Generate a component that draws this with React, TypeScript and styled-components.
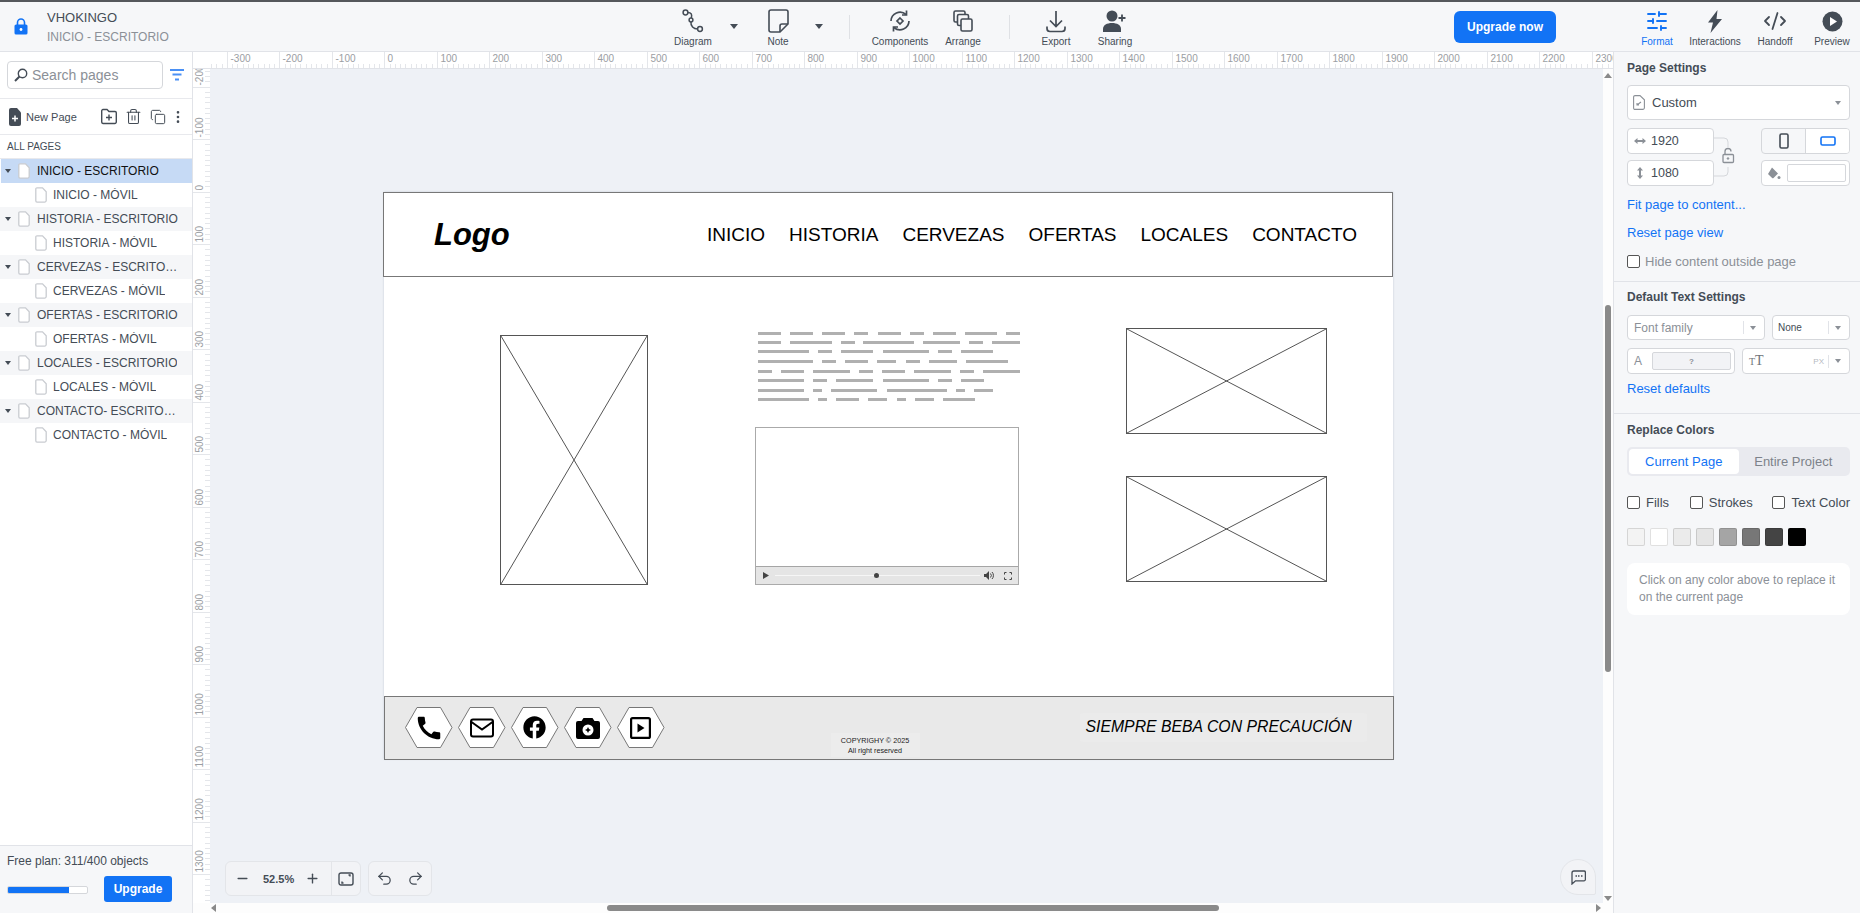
import React from 'react';
import styled, { createGlobalStyle } from 'styled-components';
import { FaFacebook } from 'react-icons/fa';
import { MdCall } from 'react-icons/md';
import { Minus, Plus, Undo2, Redo2, SlidersHorizontal, CodeXml, Trash2, Copy, EllipsisVertical } from 'lucide-react';

const GlobalStyle = createGlobalStyle`
  html, body { margin: 0; padding: 0; height: 100%; overflow: hidden; }
  body { font-family: "Liberation Sans", Arial, sans-serif; color: #444c56; background: #f6f7f9; }
  #root { height: 100%; }
  * { box-sizing: border-box; }
`;

const Shell = styled.div`
  width: 1860px;
  height: 913px;
  display: flex;
  flex-direction: column;
  border-top: 2px solid #55585c;
`;

/* Top bar */
const TopBar = styled.header`
  height: 50px;
  flex-shrink: 0;
  display: flex;
  align-items: flex-start;
  background: #f6f7f9;
  border-bottom: 1px solid #e1e3e8;
`;
const Brand = styled.div`
  width: 663px;
  height: 49px;
  display: flex;
  align-items: center;
  padding-left: 14px;
  gap: 19px;
`;
const BrandText = styled.div`
  display: flex;
  flex-direction: column;
  gap: 5px;
  margin-top: 1px;
`;
const ProjectName = styled.div`
  font-size: 13px;
  line-height: 15px;
  color: #444c56;
`;
const PageName = styled.div`
  font-size: 12px;
  line-height: 14px;
  color: #8b9097;
`;
const Tool = styled.div<{ $w?: number; $ml?: number; $active?: boolean }>`
  width: ${p => p.$w ?? 60}px;
  margin-left: ${p => p.$ml ?? 0}px;
  height: 49px;
  display: flex;
  flex-direction: column;
  align-items: center;
  color: ${p => (p.$active ? '#1273f5' : '#444c56')};
`;
const ToolIcon = styled.div`
  height: 26px;
  margin-top: 6px;
  display: flex;
  align-items: center;
  justify-content: center;
`;
const ToolLabel = styled.div`
  font-size: 10px;
  line-height: 12px;
  margin-top: 2px;
  white-space: nowrap;
`;
const Caret = styled.div<{ $ml: number }>`
  width: 12px;
  margin-left: ${p => p.$ml}px;
  margin-top: 22px;
  display: flex;
  justify-content: center;
  &::after {
    content: '';
    border-left: 4px solid transparent;
    border-right: 4px solid transparent;
    border-top: 5px solid #444c56;
  }
`;
const ToolSep = styled.div<{ $ml: number }>`
  width: 1px;
  height: 24px;
  margin-top: 13px;
  margin-left: ${p => p.$ml}px;
  background: #dfe1e5;
`;
const UpgradeNow = styled.button<{ $ml: number }>`
  width: 102px;
  height: 32px;
  margin-left: ${p => p.$ml}px;
  margin-top: 9px;
  border: none;
  border-radius: 6px;
  background: #1273f5;
  color: #fff;
  font: bold 12px "Liberation Sans", Arial, sans-serif;
`;

/* Main row */
const Main = styled.div`
  flex: 1;
  display: flex;
  min-height: 0;
`;

/* Left panel */
const LeftPanel = styled.aside`
  width: 193px;
  flex-shrink: 0;
  display: flex;
  flex-direction: column;
  background: #fff;
  border-right: 1px solid #e1e3e8;
`;
const SearchRow = styled.div`
  height: 47px;
  flex-shrink: 0;
  display: flex;
  align-items: center;
  padding-left: 7px;
  gap: 7px;
  border-bottom: 1px solid #e8e9ed;
`;
const SearchBox = styled.div`
  width: 156px;
  height: 28px;
  display: flex;
  align-items: center;
  gap: 4px;
  padding-left: 6px;
  border: 1px solid #d5d7db;
  border-radius: 4px;
  font-size: 14px;
  color: #8b9097;
`;
const PageActions = styled.div`
  height: 36px;
  flex-shrink: 0;
  display: flex;
  align-items: center;
  padding-left: 9px;
  color: #444c56;
  border-bottom: 1px solid #e8e9ed;
`;
const NewPage = styled.div`
  width: 92px;
  display: flex;
  align-items: center;
  gap: 5px;
  font-size: 11px;
`;
const ActionIcons = styled.div`
  display: flex;
  align-items: center;
  gap: 8px;
`;
const MoreIcon = styled.span`
  display: flex;
  margin-left: -4px;
`;
const AllPages = styled.div`
  height: 24px;
  flex-shrink: 0;
  display: flex;
  align-items: center;
  padding-left: 7px;
  font-size: 10px;
  border-bottom: 1px solid #e8e9ed;
`;
const PageRow = styled.div<{ $child?: boolean; $selected?: boolean }>`
  height: 24px;
  flex-shrink: 0;
  display: flex;
  align-items: center;
  font-size: 12px;
  padding-left: ${p => (p.$child ? 35 : p.$selected ? 4 : 5)}px;
  margin-left: ${p => (p.$selected ? 1 : 0)}px;
  gap: ${p => (p.$child ? 6 : 7)}px;
  color: ${p => (p.$selected ? '#111' : '#444c56')};
  background: ${p => (p.$selected ? '#c6daf5' : p.$child ? '#fff' : '#f5f6f8')};
`;
const RowCaret = styled.span`
  width: 6px;
  height: 4px;
  flex-shrink: 0;
  border-left: 3px solid transparent;
  border-right: 3px solid transparent;
  border-top: 4px solid #444c56;
`;
const RowName = styled.span`
  max-width: 142px;
  overflow: hidden;
  white-space: nowrap;
  text-overflow: ellipsis;
`;
const PlanBox = styled.div`
  margin-top: auto;
  height: 68px;
  flex-shrink: 0;
  background: #f6f7f9;
  border-top: 1px solid #e1e3e8;
  padding: 8px 20px 0 7px;
`;
const PlanText = styled.div`
  font-size: 12px;
  line-height: 14px;
`;
const PlanRow = styled.div`
  display: flex;
  align-items: center;
  justify-content: space-between;
  margin-top: 8px;
`;
const Progress = styled.div`
  width: 81px;
  height: 8px;
  margin-top: 1px;
  border: 1px solid #d5d7db;
  border-radius: 2px;
  background: #fff;
  overflow: hidden;
`;
const ProgressFill = styled.div`
  height: 100%;
  background: #1273f5;
`;
const UpgradeSmall = styled.button`
  width: 68px;
  height: 26px;
  border: none;
  border-radius: 3px;
  background: #1273f5;
  color: #fff;
  font: bold 12px "Liberation Sans", Arial, sans-serif;
`;

/* Center */
const Center = styled.main`
  width: 1420px;
  flex-shrink: 0;
  display: grid;
  grid-template-columns: 17px 1fr 10px;
  grid-template-rows: 17px 1fr 10px;
  background: #fff;
`;
const Corner = styled.div`
  background: #fff;
  border-bottom: 1px solid #e1e3e8;
`;
const RulerTop = styled.div`
  grid-column: 2 / 4;
  height: 17px;
  overflow: hidden;
  background: #fff;
  border-bottom: 1px solid #e1e3e8;
`;
const RulerLeft = styled.div`
  overflow: hidden;
  background: #fff;
`;
const Canvas = styled.div`
  position: relative;
  overflow: hidden;
  background: #eef1f6;
`;
const ScrollV = styled.div`
  position: relative;
  background: #fdfdfd;
`;
const ThumbV = styled.div`
  position: absolute;
  left: 2px;
  top: 236px;
  width: 6px;
  height: 367px;
  border-radius: 3px;
  background: #8a8a8a;
`;
const ScrollH = styled.div`
  position: relative;
  grid-column: 1 / 4;
  background: #fdfdfd;
`;
const ThumbH = styled.div`
  position: absolute;
  left: 414px;
  top: 2px;
  width: 612px;
  height: 6px;
  border-radius: 3px;
  background: #8a8a8a;
`;
const Arrow = styled.span<{ $dir: 'up' | 'down' | 'left' | 'right'; $x: number; $y: number }>`
  position: absolute;
  left: ${p => p.$x}px;
  top: ${p => p.$y}px;
  width: 0;
  height: 0;
  border: 4px solid transparent;
  ${p => (p.$dir === 'up' ? 'border-bottom: 5px solid #8a8a8a; border-top: 0;' : '')}
  ${p => (p.$dir === 'down' ? 'border-top: 5px solid #8a8a8a; border-bottom: 0;' : '')}
  ${p => (p.$dir === 'left' ? 'border-right: 5px solid #8a8a8a; border-left: 0;' : '')}
  ${p => (p.$dir === 'right' ? 'border-left: 5px solid #8a8a8a; border-right: 0;' : '')}
`;

/* The wireframe page: a free canvas */
const WirePage = styled.div`
  position: absolute;
  left: 174px;
  top: 123px;
  width: 1009px;
  height: 567px;
  background: #fff;
  box-shadow: 0 0 2px rgba(120, 130, 150, 0.35);
`;
const WireHeader = styled.div`
  position: absolute;
  left: -1px;
  top: 0;
  width: 1010px;
  height: 85px;
  display: flex;
  align-items: center;
  justify-content: space-between;
  padding: 0 35px 0 50px;
  background: #fff;
  border: 1px solid #777;
  color: #000;
`;
const WireLogo = styled.div`
  font-size: 31px;
  font-weight: bold;
  font-style: italic;
`;
const WireNav = styled.nav`
  display: flex;
  gap: 24px;
  font-size: 19px;
`;
const Placeholder = styled.svg<{ $x: number; $y: number; $w: number; $h: number }>`
  position: absolute;
  left: ${p => p.$x}px;
  top: ${p => p.$y}px;
  width: ${p => p.$w}px;
  height: ${p => p.$h}px;
  border: 1px solid #555;
  background: #fff;
`;
const TextLines = styled.div`
  position: absolute;
  left: 374px;
  top: 140px;
  width: 264px;
  display: flex;
  flex-direction: column;
`;
const TextLine = styled.div<{ $mb: number }>`
  display: flex;
  justify-content: space-between;
  margin-bottom: ${p => p.$mb}px;
`;
const TextWord = styled.span<{ $w: number }>`
  width: ${p => p.$w}px;
  height: 3px;
  background: #b0b0b0;
`;
const Video = styled.div`
  position: absolute;
  left: 371px;
  top: 235px;
  width: 264px;
  height: 158px;
  display: flex;
  flex-direction: column;
  justify-content: flex-end;
  background: #fff;
  border: 1px solid #aaa;
`;
const VideoBar = styled.div`
  height: 18px;
  display: flex;
  align-items: center;
  padding: 0 5px 0 7px;
  background: #e5e5e5;
  border-top: 1px solid #a5a5a5;
`;
const VideoTrack = styled.div`
  position: relative;
  width: 205px;
  height: 1px;
  margin-left: 6px;
  background: #f6f6f6;
  &::after {
    content: '';
    position: absolute;
    left: 99px;
    top: -2px;
    width: 5px;
    height: 5px;
    border-radius: 50%;
    background: #444;
  }
`;
const VideoIcons = styled.div`
  display: flex;
  align-items: center;
  gap: 9px;
  margin-left: 4px;
`;
const WireFooter = styled.div`
  position: absolute;
  left: 0;
  top: 504px;
  width: 1010px;
  height: 64px;
  display: flex;
  padding: 10px 0 0 20px;
  background: #e9e9e9;
  border: 1px solid #777;
`;
const Hexes = styled.div`
  display: flex;
  gap: 5.5px;
  height: 41px;
`;
const Hex = styled.div`
  position: relative;
  width: 47.5px;
  height: 41px;
  display: flex;
  align-items: center;
  justify-content: center;
  color: #000;
`;
const HexShape = styled.svg`
  position: absolute;
  inset: 0;
  width: 100%;
  height: 100%;
`;
const HexIcon = styled.div`
  position: relative;
  display: flex;
`;
const Copyright = styled.div`
  width: 89px;
  height: 24px;
  margin: 26px 0 0 166px;
  background: #ececec;
  font-size: 7.2px;
  line-height: 9.5px;
  text-align: center;
  padding-top: 3px;
  color: #222;
`;
const Slogan = styled.div`
  width: 287px;
  height: 29px;
  margin: 6px 0 0 160px;
  background: #ebebeb;
  border-radius: 3px;
  font-size: 15.8px;
  font-style: italic;
  line-height: 27px;
  white-space: nowrap;
  color: #000;
  padding-left: 6px;
`;

/* Floating controls on the canvas */
const FloatPanel = styled.div<{ $left: number; $w: number }>`
  position: absolute;
  left: ${p => p.$left}px;
  bottom: 7px;
  width: ${p => p.$w}px;
  height: 35px;
  display: flex;
  align-items: center;
  background: #f2f3f6;
  border: 1px solid #e3e5e9;
  border-radius: 6px;
  color: #444c56;
`;
const ZoomValue = styled.span`
  width: 40px;
  text-align: center;
  font-size: 11px;
  font-weight: bold;
`;
const FloatBtn = styled.div<{ $w: number }>`
  width: ${p => p.$w}px;
  display: flex;
  justify-content: center;
`;
const FloatSep = styled.div`
  width: 1px;
  height: 33px;
  margin-left: 5px;
  background: #e3e5e9;
`;
const ChatBtn = styled.div`
  position: absolute;
  right: 7px;
  bottom: 8px;
  width: 36px;
  height: 36px;
  display: flex;
  align-items: center;
  justify-content: center;
  background: #f2f3f6;
  border: 1px solid #e3e5e9;
  border-radius: 18px 18px 2px 18px;
`;

/* Right panel */
const RightPanel = styled.aside`
  width: 247px;
  flex-shrink: 0;
  background: #f6f7f9;
  border-left: 1px solid #e1e3e8;
`;
const Section = styled.section<{ $pt: number; $pb?: number; $line?: boolean }>`
  padding: ${p => p.$pt}px 10px ${p => p.$pb ?? 0}px 13px;
  border-bottom: ${p => (p.$line ? '1px solid #e1e3e8' : 'none')};
`;
const Heading = styled.h3`
  margin: 0;
  font-size: 12px;
  line-height: 14px;
  font-weight: bold;
  color: #444c56;
`;
const Field = styled.div<{ $mt?: number; $h?: number }>`
  margin-top: ${p => p.$mt ?? 0}px;
  height: ${p => p.$h ?? 26}px;
  display: flex;
  align-items: center;
  background: #fff;
  border: 1px solid #d5d7db;
  border-radius: 4px;
  font-size: 13px;
  color: #444c56;
  min-width: 0;
`;
const CustomName = styled.span`
  margin-left: 7px;
  font-size: 13px;
`;
const DropCaret = styled.span<{ $ml?: string }>`
  margin-left: ${p => p.$ml ?? 'auto'};
  margin-right: 8px;
  width: 0;
  height: 0;
  border-left: 3.5px solid transparent;
  border-right: 3.5px solid transparent;
  border-top: 4px solid #8b9097;
`;
const SizeGrid = styled.div`
  margin-top: 8px;
  display: grid;
  grid-template-columns: 87px 47px 89px;
  grid-template-rows: 26px 26px;
  row-gap: 6px;
`;
const LockCell = styled.div`
  grid-row: 1 / 3;
  grid-column: 2;
  display: flex;
  align-items: center;
`;
const SizeField = styled(Field)<{ $tall?: boolean }>`
  padding-left: ${p => (p.$tall ? 8 : 6)}px;
  gap: ${p => (p.$tall ? 7 : 5)}px;
  font-size: 12.5px;
`;
const Orientation = styled.div`
  display: flex;
  height: 26px;
  border: 1px solid #d5d7db;
  border-radius: 4px;
`;
const OrientBtn = styled.div<{ $on?: boolean }>`
  flex: 1;
  display: flex;
  align-items: center;
  justify-content: center;
  background: ${p => (p.$on ? '#fff' : 'transparent')};
  border-left: ${p => (p.$on ? '1px solid #d5d7db' : 'none')};
  border-radius: 0 3px 3px 0;
`;
const FillField = styled(Field)`
  padding: 0 3px 0 5px;
  gap: 6px;
`;
const FillSwatch = styled.div`
  flex: 1;
  height: 18px;
  background: #fff;
  border: 1px solid #d5d7db;
  border-radius: 2px;
`;
const TextLink = styled.div<{ $mt: number }>`
  margin-top: ${p => p.$mt}px;
  font-size: 13px;
  line-height: 18px;
  color: #1273f5;
`;
const CheckRow = styled.div<{ $mt: number }>`
  margin-top: ${p => p.$mt}px;
  height: 18px;
  display: flex;
  align-items: center;
  gap: 5px;
  font-size: 13px;
  color: #8b9097;
`;
const Check = styled.label<{ $w?: number }>`
  width: ${p => (p.$w ? `${p.$w}px` : 'auto')};
  display: flex;
  align-items: center;
  gap: 6px;
  font-size: 13px;
  color: #444c56;
  white-space: nowrap;
`;
const Box = styled.span`
  width: 13px;
  height: 13px;
  background: #fff;
  border: 1px solid #555;
  border-radius: 2px;
  flex-shrink: 0;
`;
const TextSelects = styled.div`
  margin-top: 11px;
  display: grid;
  grid-template-columns: 138px 78px;
  justify-content: space-between;
`;
const TextBoxes = styled.div`
  margin-top: 8px;
  display: grid;
  grid-template-columns: 108px 108px;
  justify-content: space-between;
`;
const Placeholdered = styled.span`
  font-size: 12px;
  color: #8b9097;
  padding-left: 6px;
`;
const NoneLabel = styled.span`
  font-size: 10px;
  padding-left: 5px;
`;
const FieldDivider = styled.span<{ $ml?: string }>`
  width: 1px;
  height: 13px;
  margin-left: ${p => p.$ml ?? 'auto'};
  margin-right: 6px;
  background: #e1e3e8;
`;
const ColorGlyph = styled.span`
  margin-left: 6px;
  width: 8px;
  font-size: 12px;
  color: #8b9097;
`;
const SizeGlyph = styled.span`
  margin-left: 6px;
  font-family: "Liberation Serif", serif;
  font-size: 14px;
  color: #6f747b;
  small { font-size: 10px; }
`;
const QuestionBox = styled.div`
  width: 79px;
  height: 18px;
  margin-left: 10px;
  display: flex;
  align-items: center;
  justify-content: center;
  background: #f2f3f6;
  border: 1px solid #d5d7db;
  border-radius: 2px;
  font-size: 8px;
  font-weight: bold;
  color: #8b9097;
`;
const PxLabel = styled.span`
  margin-left: auto;
  margin-right: 4px;
  font-size: 8px;
  color: #b6b9bf;
`;
const Segment = styled.div`
  margin-top: 10px;
  height: 29px;
  display: flex;
  padding: 2px;
  background: #e9eaef;
  border-radius: 5px;
  font-size: 13px;
`;
const SegmentItem = styled.div<{ $on?: boolean }>`
  flex: 1;
  display: flex;
  align-items: center;
  justify-content: center;
  border-radius: 4px;
  background: ${p => (p.$on ? '#fff' : 'transparent')};
  color: ${p => (p.$on ? '#1273f5' : '#7d828a')};
`;
const Checks = styled.div`
  margin-top: 17px;
  height: 18px;
  display: flex;
  align-items: center;
`;
const Swatches = styled.div`
  margin-top: 17px;
  display: flex;
  gap: 5px;
`;
const Swatch = styled.span<{ $c: string }>`
  width: 18px;
  height: 18px;
  background: ${p => p.$c};
  border: 1px solid rgba(0, 0, 0, 0.12);
  border-radius: 2px;
`;
const InfoBox = styled.div`
  margin-top: 17px;
  height: 52px;
  padding: 9px 12px;
  background: #fff;
  border-radius: 8px;
  font-size: 12px;
  line-height: 17px;
  color: #8b9097;
`;

const DocIcon = () => (
  <svg width="12" height="16" viewBox="0 0 12 16" fill="#fff" stroke="#c9ccd1" strokeWidth="1.3" style={{ flexShrink: 0 }}>
    <path d="M2 .8h5.5l3.7 4v8.7a1.6 1.6 0 0 1-1.6 1.6H2A1.3 1.3 0 0 1 .8 13.8V2A1.2 1.2 0 0 1 2 .8z" />
  </svg>
);

const Lock = () => (
  <svg width="14" height="17" viewBox="0 0 14 17">
    <path d="M3.5 7V4.5a3.5 3.5 0 0 1 7 0V7" fill="none" stroke="#1273f5" strokeWidth="1.6" />
    <rect x="0.5" y="6.5" width="13" height="10" rx="1.6" fill="#1273f5" />
    <circle cx="7" cy="11.5" r="1.4" fill="#fff" />
  </svg>
);

const DiagramIcon = () => (
  <svg width="22" height="24" viewBox="0 0 22 24" fill="none" stroke="#444c56" strokeWidth="1.5">
    <circle cx="3.5" cy="3.5" r="2.4" />
    <circle cx="9" cy="11" r="1.9" />
    <circle cx="18" cy="20" r="2.4" />
    <path d="M5.8 3.5c3.5 0 4.5 2 3.5 5.5M9 13c-.6 4 2.500 7 6.600 7" />
  </svg>
);

const NoteIcon = () => (
  <svg width="21" height="24" viewBox="0 0 21 24" fill="none" stroke="#444c56" strokeWidth="1.6">
    <path d="M3 1h15a2 2 0 0 1 2 2v12l-8 8H3a2 2 0 0 1-2-2V3a2 2 0 0 1 2-2z" />
    <path d="M20 15h-6a2 2 0 0 0-2 2v6" />
  </svg>
);

const ComponentsIcon = () => (
  <svg width="24" height="24" viewBox="0 0 24 24" fill="none" stroke="#444c56" strokeWidth="1.7">
    <path d="M3 12a9 9 0 0 1 15-6.500M21 12a9 9 0 0 1-15 6.500" />
    <path d="M18.500 1.500v4.500H14M5.500 22.500V18H10" />
    <path d="M12 9l3 3-3 3-3-3z" />
  </svg>
);

const ArrangeIcon = () => (
  <svg width="20" height="24" viewBox="0 0 20 24" fill="#f6f7f9" stroke="#444c56" strokeWidth="1.6">
    <rect x="1" y="2" width="11" height="11" rx="1.500" />
    <rect x="4.500" y="5.500" width="11" height="11" rx="1.500" />
    <rect x="8" y="10" width="11" height="12" rx="1.500" />
  </svg>
);

const ExportIcon = () => (
  <svg width="22" height="24" viewBox="0 0 22 24" fill="none" stroke="#444c56" strokeWidth="1.7">
    <path d="M11 2v15M5 11.500l6 6 6-6" />
    <path d="M2 17.500v2a3 3 0 0 0 3 3h12a3 3 0 0 0 3-3v-2" />
  </svg>
);

const SharingIcon = () => (
  <svg width="24" height="24" viewBox="0 0 24 24" fill="#444c56">
    <circle cx="9" cy="7" r="5.500" />
    <path d="M0 23v-3c0-4 4-6 9-6s9 2 9 6v3z" />
    <path d="M19 5.500v7M15.500 9h7" stroke="#444c56" strokeWidth="1.800" />
  </svg>
);

const BoltIcon = () => (
  <svg width="16" height="23" viewBox="0 0 16 23" fill="#444c56">
    <path d="M10.500 0L1 12.500h5L3.500 23 15 9H9.500z" />
  </svg>
);

const PreviewIcon = () => (
  <svg width="21" height="21" viewBox="0 0 21 21">
    <circle cx="10.500" cy="10.500" r="10" fill="#444c56" />
    <path d="M8 6l7 4.500L8 15z" fill="#fff" />
  </svg>
);

const SearchGlass = () => (
  <svg width="14" height="14" viewBox="0 0 14 14" fill="none" stroke="#444c56" strokeWidth="1.4">
    <circle cx="8.500" cy="5.500" r="4.200" />
    <path d="M5.500 8.500L1 13" strokeWidth="2" />
  </svg>
);

const FilterIcon = () => (
  <svg width="14" height="12" viewBox="0 0 14 12" fill="none" stroke="#4a90f5" strokeWidth="2">
    <path d="M0 1h14M2.500 5.500h9M5 10.500h4" />
  </svg>
);

const NewPageIcon = () => (
  <svg width="12" height="18" viewBox="0 0 12 18">
    <path d="M2 0h6l4 4.500V16a2 2 0 0 1-2 2H2a2 2 0 0 1-2-2V2a2 2 0 0 1 2-2z" fill="#444c56" />
    <path d="M6 7.500v6M3 10.500h6" stroke="#fff" strokeWidth="1.500" />
  </svg>
);

const FolderPlus = () => (
  <svg width="16" height="17" viewBox="0 0 16 17" fill="none" stroke="#444c56" strokeWidth="1.400">
    <path d="M2 1.500h4l2 2h6a1.300 1.300 0 0 1 1.300 1.300V14a1.500 1.500 0 0 1-1.500 1.500H2A1.500 1.500 0 0 1 .7 14V2.800A1.300 1.300 0 0 1 2 1.500z" />
    <path d="M8 6.500v6M5 9.500h6" />
  </svg>
);

const CustomPageIcon = () => (
  <svg width="12" height="15" viewBox="0 0 12 15" fill="none" stroke="#8b9097" strokeWidth="1.100" style={{ marginLeft: 5 }}>
    <path d="M2 .6h5l4.400 4.200v8a1.600 1.600 0 0 1-1.600 1.600H2a1.400 1.400 0 0 1-1.400-1.400V2A1.400 1.400 0 0 1 2 .6z" />
    <path d="M4 10l4-3M4 8v2h2" />
  </svg>
);

const WidthArrow = () => (
  <svg width="12" height="8" viewBox="0 0 12 8" fill="#8b9097">
    <path d="M0 4l3.500-3v2h5V1L12 4 8.500 7V5h-5v2z" />
  </svg>
);

const HeightArrow = () => (
  <svg width="8" height="12" viewBox="0 0 8 12" fill="#8b9097">
    <path d="M4 0l3 3.500H5v5h2L4 12 1 8.500h2v-5H1z" />
  </svg>
);

const RatioLock = () => (
  <svg width="22" height="40" viewBox="0 0 22 40" fill="none" stroke="#8b9097" strokeWidth="1">
    <path d="M0 1h10a4 4 0 0 1 4 4v5M0 39h10a4 4 0 0 0 4-4v-5" stroke="#d5d7db" />
    <rect x="9" y="17.500" width="10.500" height="8" rx="1" strokeWidth="1.300" />
    <path d="M11 17.500v-3a3 3 0 0 1 6 0" strokeWidth="1.300" />
    <circle cx="14" cy="21.500" r="0.800" fill="#8b9097" />
  </svg>
);

const BucketIcon = () => (
  <svg width="14" height="13" viewBox="0 0 14 13" fill="#8b9097">
    <path d="M5 .5l6 6-4.500 4.500a1 1 0 0 1-1.400 0L1 7z" />
    <circle cx="12" cy="10.500" r="1.500" />
  </svg>
);

const PhoneOutline = () => (
  <svg width="10" height="16" viewBox="0 0 10 16" fill="none" stroke="#444c56" strokeWidth="1.600">
    <rect x="1" y="1" width="8" height="14" rx="1.500" />
  </svg>
);

const LandscapeOutline = () => (
  <svg width="16" height="10" viewBox="0 0 16 10" fill="none" stroke="#1273f5" strokeWidth="1.600">
    <rect x="1" y="1" width="14" height="8" rx="1.500" />
  </svg>
);

const FitIcon = () => (
  <svg width="16" height="14" viewBox="0 0 16 14" fill="none" stroke="#444c56" strokeWidth="1.400">
    <rect x="1" y="1" width="14" height="12" rx="2" />
    <path d="M4 9.500V11h1.500M12 4.500V3h-1.500" />
  </svg>
);

const ChatIcon = () => (
  <svg width="15" height="15" viewBox="0 0 15 15" fill="none" stroke="#444c56" strokeWidth="1.300">
    <path d="M3 1h10a1.400 1.400 0 0 1 1.400 1.400v7A1.400 1.400 0 0 1 13 10.800H4.500L1 14V3a2 2 0 0 1 2-2z" />
    <path d="M4.500 6h1.500M7 6h1.500M10 6h1.500" />
  </svg>
);

const MailHexIcon = () => (
  <svg width="24" height="20" viewBox="0 0 24 20" fill="none" stroke="#000" strokeWidth="2">
    <rect x="1" y="1.500" width="22" height="17" rx="2" />
    <path d="M1.500 4L12 11.500 22.500 4" />
  </svg>
);

const CameraHexIcon = () => (
  <svg width="24" height="22" viewBox="0 0 24 22">
    <path d="M7.500 1h9L18.500 4H22a2 2 0 0 1 2 2v14a2 2 0 0 1-2 2H2a2 2 0 0 1-2-2V6a2 2 0 0 1 2-2h3.500z" fill="#000" />
    <circle cx="12" cy="13" r="5.500" fill="#fff" />
    <path d="M12 10l1 2 2 1-2 1-1 2-1-2-2-1 2-1z" fill="#000" />
  </svg>
);

const PlayBoxIcon = () => (
  <svg width="21" height="22" viewBox="0 0 21 22" fill="none" stroke="#000" strokeWidth="2.200">
    <rect x="1.100" y="1.100" width="18.800" height="19.800" rx="1.500" />
    <path d="M7.500 6.500l7 4.500-7 4.500z" fill="#000" stroke="none" />
  </svg>
);

const VideoPlay = () => (
  <svg width="6" height="7" viewBox="0 0 6 7"><path d="M0 0l6 3.500L0 7z" fill="#444" /></svg>
);

const VideoSound = () => (
  <svg width="11" height="9" viewBox="0 0 11 9" fill="#444">
    <path d="M0 3h2l3-3v9L2 6H0z" />
    <path d="M6.500 2.500a3 3 0 0 1 0 4M8 1a5 5 0 0 1 0 7" fill="none" stroke="#444" />
  </svg>
);

const VideoFull = () => (
  <svg width="8" height="8" viewBox="0 0 8 8" fill="none" stroke="#444">
    <path d="M.5 2.500v-2h2M5.500.5h2v2M7.500 5.500v2h-2M2.500 7.500h-2v-2" />
  </svg>
);

// ruler: minor tick each 10 units, labels each 100 units, 52.5px per 100 units
const HorizontalRuler = () => {
  const origin = 174.3;
  const ticks: React.ReactNode[] = [];
  for (let u = -330; u <= 2400; u += 10) {
    const x = Math.round(origin + u * 0.525) + 0.5;
    const major = u % 100 === 0;
    ticks.push(<line key={u} x1={x} x2={x} y1={major ? 0 : 12} y2={16} stroke="#e4e6ea" />);
    if (major) {
      ticks.push(
        <text key={`t${u}`} x={x + 3} y={10} fontSize="10" fill="#9b9ea3" fontFamily="Liberation Sans">
          {u}
        </text>
      );
    }
  }
  return <svg width="1403" height="16" style={{ display: 'block' }}>{ticks}</svg>;
};

const VerticalRuler = () => {
  const origin = 122.7;
  const ticks: React.ReactNode[] = [];
  for (let u = -230; u <= 1400; u += 10) {
    const y = Math.round(origin + u * 0.525) + 0.5;
    const major = u % 100 === 0;
    ticks.push(<line key={u} y1={y} y2={y} x1={major ? 0 : 12} x2={17} stroke="#e4e6ea" />);
    if (major) {
      ticks.push(
        <text
          key={`t${u}`}
          transform={`translate(10 ${y - 2}) rotate(-90)`}
          fontSize="10"
          fill="#9b9ea3"
          fontFamily="Liberation Sans"
        >
          {u}
        </text>
      );
    }
  }
  return <svg width="17" height="836" style={{ display: 'block' }}>{ticks}</svg>;
};

const pages = [
  ['INICIO - ESCRITORIO', 'INICIO - MÓVIL'],
  ['HISTORIA - ESCRITORIO', 'HISTORIA - MÓVIL'],
  ['CERVEZAS - ESCRITORIO', 'CERVEZAS - MÓVIL'],
  ['OFERTAS - ESCRITORIO', 'OFERTAS - MÓVIL'],
  ['LOCALES - ESCRITORIO', 'LOCALES - MÓVIL'],
  ['CONTACTO- ESCRITORIO', 'CONTACTO - MÓVIL'],
];

const navItems = ['INICIO', 'HISTORIA', 'CERVEZAS', 'OFERTAS', 'LOCALES', 'CONTACTO'];

const textRows = [
  [23, 23, 23, 14, 23, 14, 23, 32, 14],
  [23, 42, 14, 51, 37, 14, 28],
  [51, 14, 32, 46, 14, 32],
  [55, 14, 23, 19, 14, 28, 42],
  [14, 23, 37, 14, 23, 37, 14, 37],
  [46, 14, 37, 46, 14, 23],
  [46, 9, 46, 60, 9, 19],
  [51, 9, 23, 19, 9, 19, 32],
];
const textRowGaps = [6, 6, 7, 7, 6, 7, 6, 0];
// last rows stop short of the right edge
const textRowWidths = [262, 262, 235, 250, 262, 226, 235, 217];

const swatches = ['#f3f3f3', '#fff', '#ebebeb', '#e5e5e5', '#a5a5a5', '#777', '#444', '#000'];

const hexIcons = [
  <MdCall size={30} key="call" />,
  <MailHexIcon key="mail" />,
  <FaFacebook size={23} key="fb" />,
  <CameraHexIcon key="cam" />,
  <PlayBoxIcon key="play" />,
];

const App: React.FC = () => {
  return (
    <Shell>
      <GlobalStyle />
      <TopBar>
        <Brand>
          <Lock />
          <BrandText>
            <ProjectName>VHOKINGO</ProjectName>
            <PageName>INICIO - ESCRITORIO</PageName>
          </BrandText>
        </Brand>
        <Tool><ToolIcon><DiagramIcon /></ToolIcon><ToolLabel>Diagram</ToolLabel></Tool>
        <Caret $ml={5} />
        <Tool $ml={8}><ToolIcon><NoteIcon /></ToolIcon><ToolLabel>Note</ToolLabel></Tool>
        <Caret $ml={5} />
        <ToolSep $ml={24} />
        <Tool $ml={20}><ToolIcon><ComponentsIcon /></ToolIcon><ToolLabel>Components</ToolLabel></Tool>
        <Tool $ml={3}><ToolIcon><ArrangeIcon /></ToolIcon><ToolLabel>Arrange</ToolLabel></Tool>
        <ToolSep $ml={16} />
        <Tool $w={58} $ml={17}><ToolIcon><ExportIcon /></ToolIcon><ToolLabel>Export</ToolLabel></Tool>
        <Tool $w={58} $ml={1}><ToolIcon><SharingIcon /></ToolIcon><ToolLabel>Sharing</ToolLabel></Tool>
        <UpgradeNow $ml={310}>Upgrade now</UpgradeNow>
        <Tool $w={56} $ml={73} $active>
          <ToolIcon><SlidersHorizontal size={24} strokeWidth={1.9} color="#1273f5" /></ToolIcon>
          <ToolLabel>Format</ToolLabel>
        </Tool>
        <Tool><ToolIcon><BoltIcon /></ToolIcon><ToolLabel>Interactions</ToolLabel></Tool>
        <Tool $w={58} $ml={1}><ToolIcon><CodeXml size={24} strokeWidth={1.8} /></ToolIcon><ToolLabel>Handoff</ToolLabel></Tool>
        <Tool $w={56}><ToolIcon><PreviewIcon /></ToolIcon><ToolLabel>Preview</ToolLabel></Tool>
      </TopBar>

      <Main>
        <LeftPanel>
          <SearchRow>
            <SearchBox><SearchGlass />Search pages</SearchBox>
            <FilterIcon />
          </SearchRow>
          <PageActions>
            <NewPage><NewPageIcon />New Page</NewPage>
            <ActionIcons>
              <FolderPlus />
              <Trash2 size={17} strokeWidth={1.5} />
              <Copy size={16} strokeWidth={1.5} />
              <MoreIcon><EllipsisVertical size={16} strokeWidth={2} /></MoreIcon>
            </ActionIcons>
          </PageActions>
          <AllPages>ALL PAGES</AllPages>
          {pages.map(([desk, mobile], i) => (
            <React.Fragment key={desk}>
              <PageRow $selected={i === 0}>
                <RowCaret />
                <DocIcon />
                <RowName>{desk}</RowName>
              </PageRow>
              <PageRow $child>
                <DocIcon />
                <RowName>{mobile}</RowName>
              </PageRow>
            </React.Fragment>
          ))}
          <PlanBox>
            <PlanText>Free plan: 311/400 objects</PlanText>
            <PlanRow>
              <Progress><ProgressFill style={{ width: `${(311 / 400) * 100}%` }} /></Progress>
              <UpgradeSmall>Upgrade</UpgradeSmall>
            </PlanRow>
          </PlanBox>
        </LeftPanel>

        <Center>
          <Corner />
          <RulerTop><HorizontalRuler /></RulerTop>
          <RulerLeft><VerticalRuler /></RulerLeft>
          <Canvas>
            <WirePage>
              <WireHeader>
                <WireLogo>Logo</WireLogo>
                <WireNav>
                  {navItems.map(n => <span key={n}>{n}</span>)}
                </WireNav>
              </WireHeader>

              <Placeholder $x={116} $y={143} $w={148} $h={250} viewBox="0 0 100 100" preserveAspectRatio="none">
                <path d="M0 0L100 100M100 0L0 100" stroke="#555" strokeWidth="1" vectorEffect="non-scaling-stroke" />
              </Placeholder>
              <Placeholder $x={742} $y={136} $w={201} $h={106} viewBox="0 0 100 100" preserveAspectRatio="none">
                <path d="M0 0L100 100M100 0L0 100" stroke="#555" strokeWidth="1" vectorEffect="non-scaling-stroke" />
              </Placeholder>
              <Placeholder $x={742} $y={284} $w={201} $h={106} viewBox="0 0 100 100" preserveAspectRatio="none">
                <path d="M0 0L100 100M100 0L0 100" stroke="#555" strokeWidth="1" vectorEffect="non-scaling-stroke" />
              </Placeholder>

              <TextLines>
                {textRows.map((words, r) => (
                  <TextLine key={r} $mb={textRowGaps[r]} style={{ width: textRowWidths[r] }}>
                    {words.map((w, i) => <TextWord key={i} $w={w} />)}
                  </TextLine>
                ))}
              </TextLines>

              <Video>
                <VideoBar>
                  <VideoPlay />
                  <VideoTrack />
                  <VideoIcons>
                    <VideoSound />
                    <VideoFull />
                  </VideoIcons>
                </VideoBar>
              </Video>

              <WireFooter>
                <Hexes>
                  {hexIcons.map((icon, i) => (
                    <Hex key={i}>
                      <HexShape viewBox="0 0 47.5 41">
                        <polygon points="0.5,20.5 12,0.5 35.500,0.5 47,20.500 35.500,40.500 12,40.500" fill="#fff" stroke="#777" />
                      </HexShape>
                      <HexIcon>{icon}</HexIcon>
                    </Hex>
                  ))}
                </Hexes>
                <Copyright>COPYRIGHY © 2025<br />All right reserved</Copyright>
                <Slogan>SIEMPRE BEBA CON PRECAUCIÓN</Slogan>
              </WireFooter>
            </WirePage>

            <FloatPanel $left={15} $w={136}>
              <FloatBtn $w={33}><Minus size={15} strokeWidth={2.2} /></FloatBtn>
              <ZoomValue>52.5%</ZoomValue>
              <FloatBtn $w={28}><Plus size={15} strokeWidth={2.2} /></FloatBtn>
              <FloatSep />
              <FloatBtn $w={28}><FitIcon /></FloatBtn>
            </FloatPanel>
            <FloatPanel $left={158} $w={64}>
              <FloatBtn $w={31}><Undo2 size={17} strokeWidth={1.8} /></FloatBtn>
              <FloatBtn $w={31}><Redo2 size={17} strokeWidth={1.8} /></FloatBtn>
            </FloatPanel>
            <ChatBtn><ChatIcon /></ChatBtn>
          </Canvas>
          <ScrollV>
            <Arrow $dir="up" $x={1} $y={4} />
            <ThumbV />
            <Arrow $dir="down" $x={1} $y={827} />
          </ScrollV>
          <ScrollH>
            <Arrow $dir="left" $x={18} $y={1} />
            <ThumbH />
            <Arrow $dir="right" $x={1403} $y={1} />
          </ScrollH>
        </Center>

        <RightPanel>
          <Section $pt={9} $pb={11} $line>
            <Heading>Page Settings</Heading>
            <Field $mt={10} $h={35}>
              <CustomPageIcon />
              <CustomName>Custom</CustomName>
              <DropCaret />
            </Field>
            <SizeGrid>
              <SizeField><WidthArrow />1920</SizeField>
              <LockCell><RatioLock /></LockCell>
              <Orientation>
                <OrientBtn><PhoneOutline /></OrientBtn>
                <OrientBtn $on><LandscapeOutline /></OrientBtn>
              </Orientation>
              <SizeField $tall><HeightArrow />1080</SizeField>
              <FillField><BucketIcon /><FillSwatch /></FillField>
            </SizeGrid>
            <TextLink $mt={10}>Fit page to content...</TextLink>
            <TextLink $mt={10}>Reset page view</TextLink>
            <CheckRow $mt={10}>
              <Box />
              Hide content outside page
            </CheckRow>
          </Section>

          <Section $pt={8} $pb={15} $line>
            <Heading>Default Text Settings</Heading>
            <TextSelects>
              <Field $h={25}>
                <Placeholdered>Font family</Placeholdered>
                <FieldDivider />
                <DropCaret $ml="0" />
              </Field>
              <Field $h={25}>
                <NoneLabel>None</NoneLabel>
                <FieldDivider />
                <DropCaret $ml="0" />
              </Field>
            </TextSelects>
            <TextBoxes>
              <Field>
                <ColorGlyph>A</ColorGlyph>
                <QuestionBox>?</QuestionBox>
              </Field>
              <Field>
                <SizeGlyph><small>T</small>T</SizeGlyph>
                <PxLabel>PX</PxLabel>
                <FieldDivider $ml="0" />
                <DropCaret $ml="0" />
              </Field>
            </TextBoxes>
            <TextLink $mt={6}>Reset defaults</TextLink>
          </Section>

          <Section $pt={9}>
            <Heading>Replace Colors</Heading>
            <Segment>
              <SegmentItem $on>Current Page</SegmentItem>
              <SegmentItem>Entire Project</SegmentItem>
            </Segment>
            <Checks>
              <Check $w={63}><Box />Fills</Check>
              <Check $w={83}><Box />Strokes</Check>
              <Check><Box />Text Color</Check>
            </Checks>
            <Swatches>
              {swatches.map(c => <Swatch key={c} $c={c} />)}
            </Swatches>
            <InfoBox>Click on any color above to replace it on the current page</InfoBox>
          </Section>
        </RightPanel>
      </Main>
    </Shell>
  );
};

export default App;
